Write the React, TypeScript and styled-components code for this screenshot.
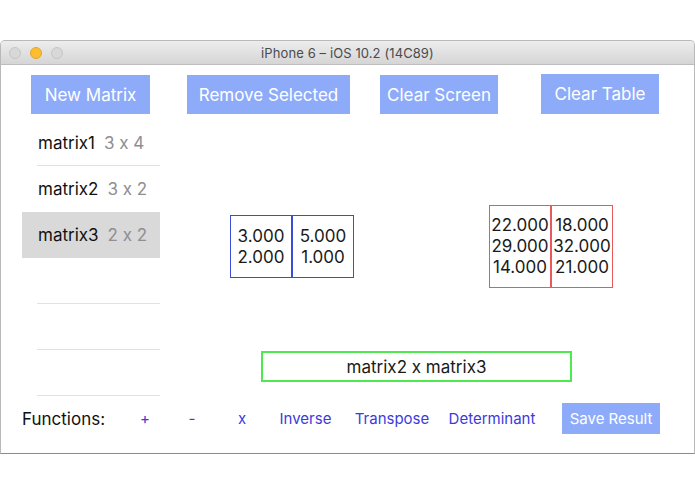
import React from "react";
import styled, { createGlobalStyle } from "styled-components";

const Global = createGlobalStyle`
  html, body { margin: 0; padding: 0; background: #ffffff; }
  body {
    font-family: Inter, "Liberation Sans", "DejaVu Sans", sans-serif;
    font-feature-settings: "calt" 0;
    -webkit-font-smoothing: antialiased;
  }
  * { box-sizing: border-box; }
`;

const Page = styled.div`
  width: 695px;
  height: 494px;
  padding-top: 40px;
  background: #ffffff;
  overflow: hidden;
`;

const Window = styled.div`
  width: 695px;
  height: 414px;
  border: 1px solid #b9b9b9;
  border-bottom-color: #8c8c8c;
  border-radius: 5px 5px 0 0;
  display: flex;
  flex-direction: column;
  overflow: hidden;
  background: #ffffff;
`;

const TitleBar = styled.div`
  height: 24px;
  flex: none;
  display: grid;
  grid-template-columns: 1fr auto 1fr;
  align-items: center;
  background: linear-gradient(#ededed, #d5d5d5);
  border-bottom: 1px solid #bdbdbd;
`;

const Lights = styled.div`
  display: flex;
  gap: 9px;
  padding-left: 8px;
  padding-top: 1px;
`;

const Light = styled.span<{ $color: string; $edge: string }>`
  width: 12px;
  height: 12px;
  border-radius: 50%;
  background: ${(p) => p.$color};
  border: 1px solid ${(p) => p.$edge};
`;

const Title = styled.div`
  font-size: 13px;
  color: #4b4b4b;
  letter-spacing: 0.1px;
`;

const Content = styled.div`
  flex: 1;
  display: flex;
  flex-direction: column;
`;

const ButtonRow = styled.div`
  height: 49px;
  display: flex;
  align-items: flex-start;
  padding: 10px 0 0 30px;
`;

const ActionButton = styled.button<{ $w: number; $ml?: number; $dy?: number; $h?: number }>`
  width: ${(p) => p.$w}px;
  height: ${(p) => p.$h ?? 39}px;
  margin-left: ${(p) => p.$ml ?? 0}px;
  margin-top: ${(p) => p.$dy ?? 0}px;
  background: #8eabfa;
  color: #ffffff;
  border: none;
  padding: 0;
  font-family: inherit;
  font-feature-settings: inherit;
  font-size: 17px;
  font-weight: 400;
  display: flex;
  align-items: center;
  justify-content: center;
`;

const Main = styled.div`
  height: 276px;
  margin-top: 6px;
  display: flex;
`;

const List = styled.div`
  width: 138px;
  margin-left: 21px;
  display: flex;
  flex-direction: column;
`;

const Row = styled.div<{ $selected?: boolean; $sep?: boolean }>`
  height: 46px;
  position: relative;
  display: flex;
  align-items: center;
  gap: 9px;
  padding-left: 16px;
  font-size: 17px;
  background: ${(p) => (p.$selected ? "#d9d9d9" : "transparent")};
  &::after {
    content: "";
    display: ${(p) => (p.$sep ? "block" : "none")};
    position: absolute;
    left: 15px;
    right: 0;
    bottom: 0;
    height: 1px;
    background: #e2e2e2;
  }
`;

const RowName = styled.span`
  color: #111111;
`;

const RowSize = styled.span`
  color: #8e8e93;
`;

const Canvas = styled.div`
  flex: 1;
  position: relative;
  display: flex;
  flex-direction: column;
  justify-content: flex-end;
  padding-bottom: 14px;
`;

const MatrixView = styled.div<{ $left: number; $top: number }>`
  position: absolute;
  left: ${(p) => p.$left}px;
  top: ${(p) => p.$top}px;
  display: flex;
`;

const Cell = styled.div<{ $color: string; $h: number }>`
  width: 62px;
  height: ${(p) => p.$h}px;
  border: 1px solid ${(p) => p.$color};
  display: flex;
  flex-direction: column;
  align-items: center;
  justify-content: center;
  font-size: 17px;
  line-height: 21px;
  color: #1a1a1a;
`;

const Expression = styled.div`
  width: 311px;
  height: 31px;
  margin-left: 101px;
  border: 2px solid #4ee94e;
  display: flex;
  align-items: center;
  justify-content: center;
  font-size: 17px;
  color: #1a1a1a;
`;

const FunctionsRow = styled.div`
  margin-top: 7px;
  height: 31px;
  padding-left: 21px;
  display: grid;
  grid-template-columns: 100px 46px 48px 52px 75px 98px 102px 117px;
  align-items: center;
`;

const FunctionsLabel = styled.span`
  font-size: 17px;
  color: #111111;
`;

const FnLink = styled.span`
  font-size: 15px;
  color: #3b3bdb;
  text-align: center;
  white-space: nowrap;
`;

const SaveButton = styled.button`
  justify-self: end;
  width: 98px;
  height: 31px;
  background: #8eabfa;
  color: #ffffff;
  border: none;
  padding: 0;
  font-family: inherit;
  font-feature-settings: inherit;
  font-size: 15px;
  display: flex;
  align-items: center;
  justify-content: center;
`;

type Mat = { color: string; height: number; left: number; top: number; cols: string[][] };

const matrices: Mat[] = [
  {
    color: "#3a4cd8",
    height: 63,
    left: 70,
    top: 95,
    cols: [
      ["3.000", "2.000"],
      ["5.000", "1.000"],
    ],
  },
  {
    color: "#e9585b",
    height: 83,
    left: 329,
    top: 85,
    cols: [
      ["22.000", "29.000", "14.000"],
      ["18.000", "32.000", "21.000"],
    ],
  },
];

const rows = [
  { name: "matrix1", size: "3 x 4", sep: true },
  { name: "matrix2", size: "3 x 2" },
  { name: "matrix3", size: "2 x 2", selected: true },
  { name: "", size: "", sep: true },
  { name: "", size: "", sep: true },
  { name: "", size: "", sep: true },
];

export default function App() {
  return (
    <Page>
      <Global />
      <Window>
        <TitleBar>
          <Lights>
            <Light $color="#d8d8d8" $edge="#c6c6c6" />
            <Light $color="#fcbd2f" $edge="#e3a52c" />
            <Light $color="#d8d8d8" $edge="#c6c6c6" />
          </Lights>
          <Title>iPhone 6 – iOS 10.2 (14C89)</Title>
          <span />
        </TitleBar>
        <Content>
          <ButtonRow>
            <ActionButton $w={119}>New Matrix</ActionButton>
            <ActionButton $w={163} $ml={37}>Remove Selected</ActionButton>
            <ActionButton $w={118} $ml={30}>Clear Screen</ActionButton>
            <ActionButton $w={118} $ml={43} $dy={-1} $h={40}>Clear Table</ActionButton>
          </ButtonRow>
          <Main>
            <List>
              {rows.map((r, i) => (
                <Row key={i} $selected={r.selected} $sep={r.sep}>
                  {r.name && <RowName>{r.name}</RowName>}
                  {r.size && <RowSize>{r.size}</RowSize>}
                </Row>
              ))}
            </List>
            <Canvas>
              {matrices.map((m, i) => (
                <MatrixView key={i} $left={m.left} $top={m.top}>
                  {m.cols.map((col, j) => (
                    <Cell key={j} $color={m.color} $h={m.height}>
                      {col.map((v, k) => (
                        <span key={k}>{v}</span>
                      ))}
                    </Cell>
                  ))}
                </MatrixView>
              ))}
              <Expression>matrix2 x matrix3</Expression>
            </Canvas>
          </Main>
          <FunctionsRow>
            <FunctionsLabel>Functions:</FunctionsLabel>
            <FnLink>+</FnLink>
            <FnLink>-</FnLink>
            <FnLink>x</FnLink>
            <FnLink>Inverse</FnLink>
            <FnLink>Transpose</FnLink>
            <FnLink>Determinant</FnLink>
            <SaveButton>Save Result</SaveButton>
          </FunctionsRow>
        </Content>
      </Window>
    </Page>
  );
}
